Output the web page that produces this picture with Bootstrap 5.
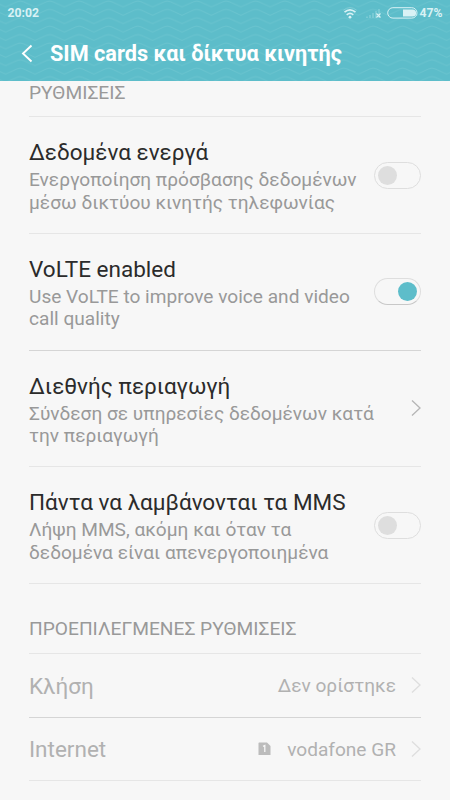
<!DOCTYPE html>
<html lang="el">
<head>
<meta charset="utf-8">
<meta name="viewport" content="width=device-width, initial-scale=1">
<title>SIM cards και δίκτυα κινητής</title>
<link href="https://cdn.jsdelivr.net/npm/bootstrap@5.3.0/dist/css/bootstrap.min.css" rel="stylesheet">
<style>
body{font-family:Roboto,"Liberation Sans",sans-serif;background:#f7f7f7;width:450px;height:800px;overflow:hidden;color:#999}
.top-area{height:81px;background:#5dbdca}
.waves{left:0;top:0;width:450px;height:81px}
.status{height:26px;padding:0 7.5px 0 7.5px;color:#d9f2f5;font-size:12.2px;font-weight:700;line-height:26px}
.title-bar{height:55px;padding-left:21px}
.title-bar h1{font-size:21.7px;font-weight:700;line-height:26px;margin:1px 0 0 17px}
.settings{padding:0 29px}
.heading{font-size:19.2px;line-height:22px;white-space:nowrap}
.rule{border-bottom:1px solid #e6e6e6}
.rule-dark{border-bottom-color:#d5d5d5}
.heading-one{height:36px;padding-top:1px}
.heading-two{height:70px;padding-top:34px}
.setting{height:116.75px;padding-top:21px}
.setting h2{font-size:22.5px;font-weight:400;line-height:28px;color:#2b2b2b;margin:0 0 3px;white-space:nowrap}
.setting p{font-size:19.1px;line-height:22.7px;margin:0;white-space:nowrap}
.toggle{width:47px;height:27px;border:1px solid #dedede;border-radius:14px;padding:0 3px;margin-top:23.500px;flex:none}
.toggle i{width:19px;height:19px;border-radius:50%;background:#dedede}
.toggle.on{border-bottom-color:#c8c8c8;margin-top:23px}
.toggle.on i{background:#5dbdca}
.arrow{margin-top:27.500px}
.choice{height:63.5px;color:#b1b1b1;font-size:19.1px}
.choice strong{font-size:22.5px;font-weight:400;padding-top:3px}
.choice span{padding-top:3px}
.chevron{margin-left:15px}
.wifi{margin-right:8px}
.battery-text{margin-left:2px}
svg{display:block;flex:none}
</style>
</head>
<body>
<header class="top-area position-relative text-white">
<svg class="waves position-absolute"><defs><pattern id="wave" width="29.4" height="8.4" patternUnits="userSpaceOnUse" x="5.6" y="0"><path d="M-1 6.500L0 6.900L11.500 1.700L14.700 1L17.900 1.700L29.400 6.900L30.400 6.500" fill="none" stroke="#6cc4cf" stroke-width=".9"/></pattern></defs><rect width="450" height="81" fill="url(#wave)"/></svg>
<div class="status d-flex align-items-center position-relative">
<span class="me-auto">20:02</span>
<svg class="wifi" width="14" height="12" viewBox="0 0 14 12" fill="none" stroke="#d9f2f5" stroke-width="1.6"><path d="M1.500 5.200Q7 .5 12.500 5.200M3.700 7.800Q7 5 10.300 7.800"/><path d="M.3 3.200Q7-2 13.700 3.200" stroke="#82ced7" stroke-width="1"/><circle cx="7" cy="10.200" r="1.400" fill="#d9f2f5" stroke="none"/></svg>
<svg width="18" height="12" viewBox="0 0 18 12"><path d="M1 11V9.500h2V11M4 11V8h2v3M7 11V6h2v5M10 11V4h2v7M13 11V2h2v9" fill="#79cad4"/><path d="M11.500 6.500l4 4m0-4l-4 4" stroke="#d9f2f5" stroke-width="1.100"/></svg>
<svg class="ms-1" width="31" height="12" viewBox="0 0 31 12"><rect x=".7" y=".7" width="29.300" height="10.400" rx="5.200" fill="none" stroke="#d9f2f5"/><path d="M16 2.400h9.500a3.600 3.600 0 0 1 0 7.200H16z" fill="#d9f2f5"/></svg>
<span class="battery-text">47%</span>
</div>
<div class="title-bar d-flex align-items-center position-relative">
<svg width="12" height="19" viewBox="0 0 12 19" fill="none" stroke="#fff" stroke-width="1.900"><path d="M10.500 1.500L2 9.500l8.500 8"/></svg>
<h1>SIM cards και δίκτυα κινητής</h1>
</div>
</header>
<main class="settings">
<div class="heading heading-one rule">ΡΥΘΜΙΣΕΙΣ</div>
<section class="setting rule d-flex justify-content-between"><div><h2>Δεδομένα ενεργά</h2><p>Ενεργοποίηση πρόσβασης δεδομένων<br>μέσω δικτύου κινητής τηλεφωνίας</p></div><div class="toggle d-flex align-items-center"><i></i></div></section>
<section class="setting rule rule-dark d-flex justify-content-between"><div><h2>VoLTE enabled</h2><p>Use VoLTE to improve voice and video<br>call quality</p></div><div class="toggle on d-flex align-items-center justify-content-end"><i></i></div></section>
<section class="setting rule d-flex justify-content-between"><div><h2>Διεθνής περιαγωγή</h2><p>Σύνδεση σε υπηρεσίες δεδομένων κατά<br>την περιαγωγή</p></div><svg class="arrow" width="10" height="18" viewBox="0 0 10 18" fill="none" stroke="#b5b5b5" stroke-width="1.300"><path d="M1 1.500L9 9l-8 7.500"/></svg></section>
<section class="setting rule d-flex justify-content-between"><div><h2>Πάντα να λαμβάνονται τα MMS</h2><p>Λήψη MMS, ακόμη και όταν τα<br>δεδομένα είναι απενεργοποιημένα</p></div><div class="toggle d-flex align-items-center"><i></i></div></section>
<div class="heading heading-two rule">ΠΡΟΕΠΙΛΕΓΜΕΝΕΣ ΡΥΘΜΙΣΕΙΣ</div>
<section class="choice rule rule-dark d-flex align-items-center"><strong class="me-auto">Κλήση</strong><span>Δεν ορίστηκε</span><svg class="chevron" width="10" height="18" viewBox="0 0 10 18" fill="none" stroke="#dedede" stroke-width="1.300"><path d="M1 1.500L9 9l-8 7.500"/></svg></section>
<section class="choice rule d-flex align-items-center"><strong class="me-auto">Internet</strong><svg class="me-3" width="13" height="14" viewBox="0 0 13 14"><path d="M1 .5h8l3.500 3.500v9H.5V1z" fill="#bcbcbc"/><path d="M5 4.300L6.800 3.500v6.500" fill="none" stroke="#f7f7f7" stroke-width="1.300"/></svg><span>vodafone GR</span><svg class="chevron" width="10" height="18" viewBox="0 0 10 18" fill="none" stroke="#dedede" stroke-width="1.300"><path d="M1 1.500L9 9l-8 7.500"/></svg></section>
</main>
<script src="https://cdn.jsdelivr.net/npm/bootstrap@5.3.0/dist/js/bootstrap.bundle.min.js"></script>
</body>
</html>
